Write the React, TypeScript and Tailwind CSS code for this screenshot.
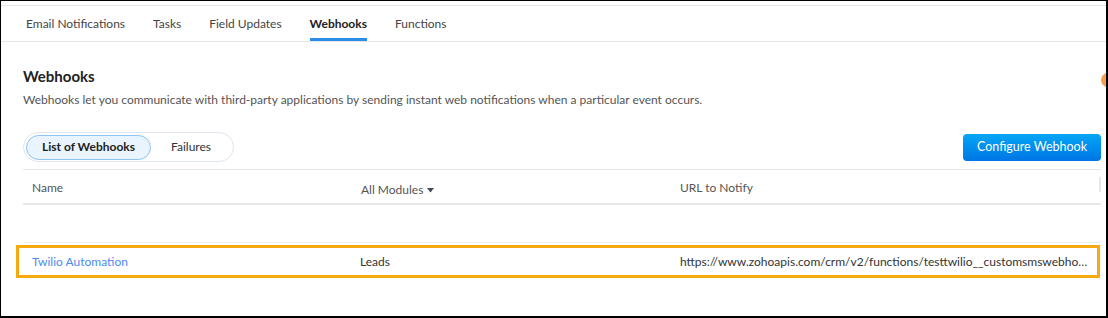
const tabs = ["Email Notifications", "Tasks", "Field Updates", "Webhooks", "Functions"];

export default function App() {
  return (
    <div className="relative h-[318px] w-[1108px] overflow-hidden border-t border-b-2 border-l border-r-2 border-black bg-white font-['Lato',sans-serif] text-[12px] text-[#333]">
      {/* Tabs */}
      <div className="mt-[4px] flex h-[37px] gap-[28px] border-t border-b border-[#e3e6ea] pl-[25px]">
        {tabs.map((t) => (
          <div
            key={t}
            className={
              t === "Webhooks"
                ? "flex items-center border-b-[3px] border-[#2b8de6] pt-[3px] font-bold text-[#222]"
                : "flex items-center text-[#444]"
            }
          >
            {t}
          </div>
        ))}
      </div>

      {/* orange dot on edge */}
      <div className="absolute right-[-9px] top-[72px] h-[14px] w-[14px] rounded-full bg-[#f5a04a]" />

      <div className="pl-[22px] pr-[5px] pt-[25px]">
        <h1 className="text-[15px] font-bold leading-[18px] text-[#222]">Webhooks</h1>
        <p className="mt-[7px] leading-[15px] text-[#555]">
          Webhooks let you communicate with third-party applications by sending instant web notifications when a
          particular event occurs.
        </p>

        <div className="mt-[25px] flex items-center justify-between">
          <div className="flex h-[30px] items-center rounded-full border border-[#dfe5ec] px-[2px]">
            <div className="flex h-[25px] w-[125px] items-center justify-center rounded-full border border-[#8cc4f2] bg-[#e9f4fe] font-bold text-[#222]">
              List of Webhooks
            </div>
            <div className="flex w-[80px] items-center justify-center text-[#333]">Failures</div>
          </div>
          <button className="flex h-[27px] w-[138px] items-center justify-center rounded-[4px] bg-gradient-to-b from-[#0aa6f5] to-[#0075e4] text-[12.5px] text-white">
            Configure Webhook
          </button>
        </div>

        {/* Table header */}
        <div className="mt-[7px] flex h-[36px] border-t border-b-2 border-[#e8e8e8] text-[#555]">
          <div className="w-[329px] pl-[9px] pt-[9px]">Name</div>
          <div className="flex w-[319px] items-center gap-[4px] pl-[9px] pt-[7px]">
            All Modules
            <svg width="7" height="5" viewBox="0 0 7 5" className="mt-[1px]">
              <path d="M0 0h7L3.5 4.5z" fill="#3d4a5c" />
            </svg>
          </div>
          <div className="flex-1 pl-[9px] pt-[9px]">URL to Notify</div>
          <div className="mt-[7px] h-[15px] w-[2px] bg-[#e4e8ec]" />
        </div>

        <div className="mt-[37px] border-t border-[#efefef]" />
      </div>

      {/* Highlighted row */}
      <div className="ml-[15px] mt-[2px] flex h-[33px] w-[1084px] items-center border-[3px] border-[#f6aa0f] text-[#333]">
        <div className="w-[329px] shrink-0 pl-[13px] text-[#4a8cf0]">Twilio Automation</div>
        <div className="w-[320px] shrink-0 pl-[12px]">Leads</div>
        <div className="min-w-0 flex-1 truncate pl-[12px] pr-[3px]">
          https://www.zohoapis.com/crm/v2/functions/testtwilio__customsmswebhook/actions/execute
        </div>
      </div>
    </div>
  );
}
